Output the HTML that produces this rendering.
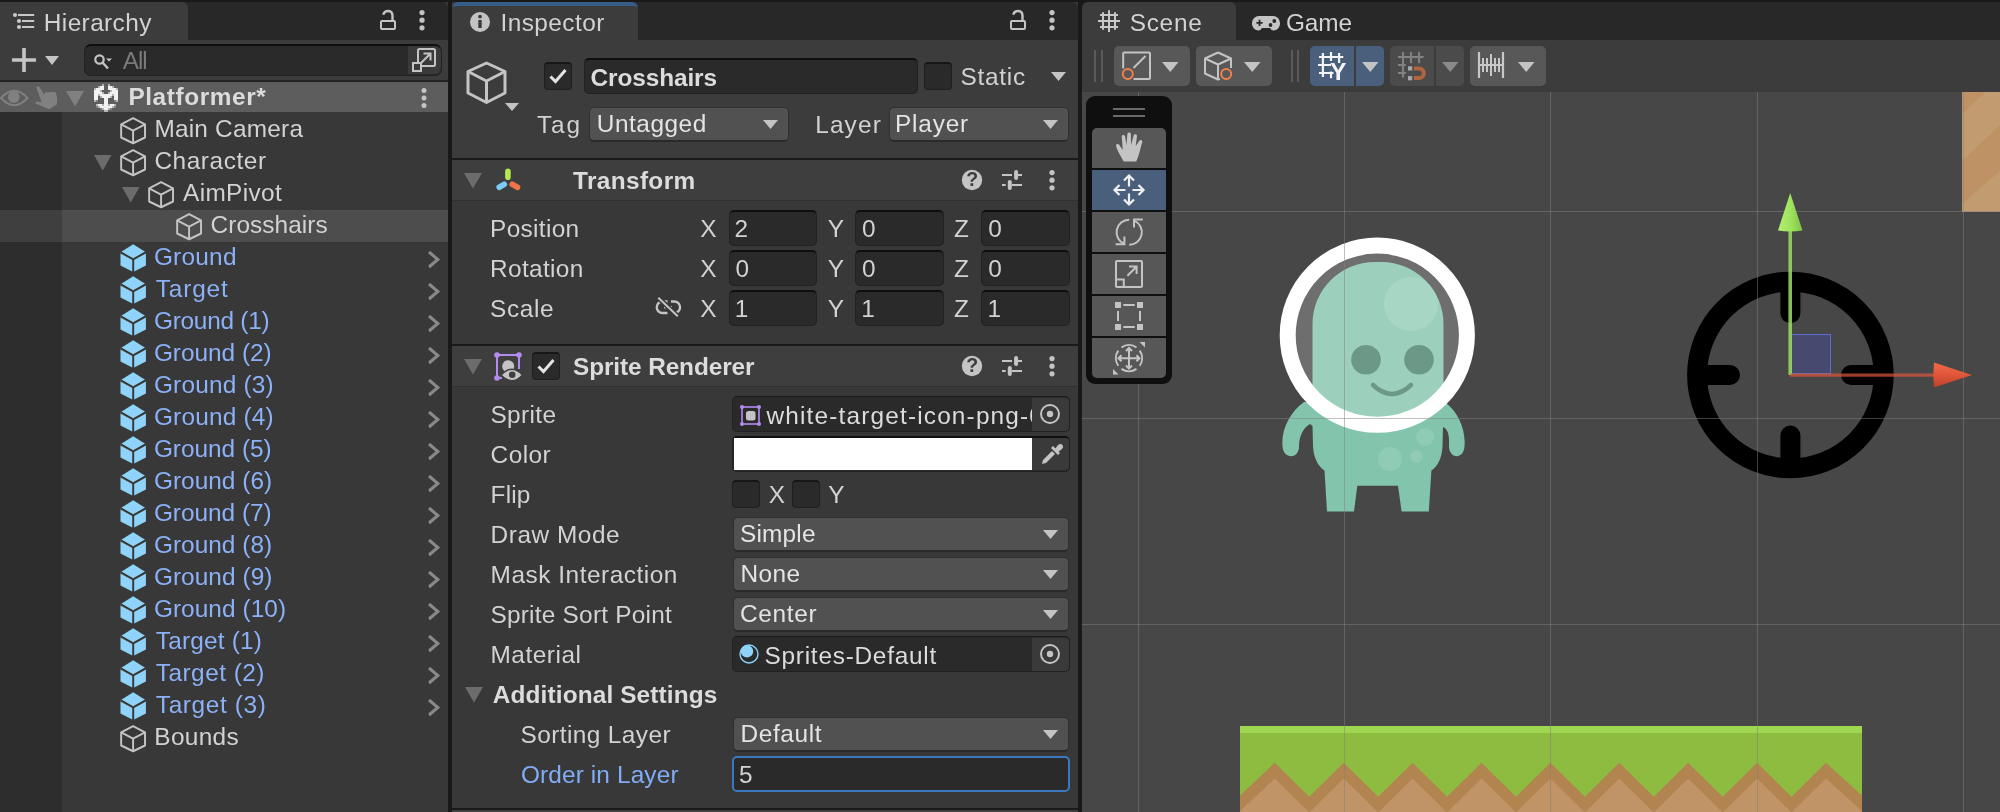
<!DOCTYPE html>
<html><head><meta charset="utf-8"><title>Unity Editor</title>
<style>
html,body{margin:0;padding:0;}
body{width:2000px;height:812px;overflow:hidden;background:#191919;position:relative;font-family:"Liberation Sans", sans-serif;}
.b{position:absolute;box-sizing:border-box;}
.t{position:absolute;white-space:pre;line-height:1;font-family:"Liberation Sans", sans-serif;}
svg{overflow:visible;}
#root{position:absolute;left:0;top:0;width:2000px;height:812px;will-change:transform;}
</style></head><body><div id="root">
<div class="b" style="left:0px;top:0px;width:2000px;height:2px;background:#191919;"></div>
<div class="b" style="left:0px;top:2px;width:448px;height:810px;background:#383838;"></div>
<div class="b" style="left:0px;top:2px;width:448px;height:38px;background:#282828;border-radius:0 6px 0 0;"></div>
<div class="b" style="left:0px;top:2px;width:188px;height:38px;background:#3c3c3c;border-radius:0 6px 0 0;"></div>
<svg class="b" style="left:8px;top:6px" width="32" height="28" viewBox="8 6 32 28"><g fill="#c8c8c8"><circle cx="15" cy="15" r="2.100"/><circle cx="19" cy="21" r="2.100"/><circle cx="19" cy="27" r="2.100"/><rect x="18" y="14" width="16.200" height="2"/><rect x="22" y="20" width="12.200" height="2"/><rect x="22" y="26" width="12.200" height="2"/></g></svg>
<div class="t" style="left:43.8px;top:10.55px;font-size:24.4px;font-weight:400;color:#d2d2d2;letter-spacing:0.403px;">Hierarchy</div>
<svg class="b" style="left:379px;top:10px;" width="18" height="22" viewBox="0 0 18 22"><g fill="none" stroke="#c4c4c4"><rect x="2" y="11" width="14" height="8" rx="1" stroke-width="2"/><path d="M4.200 4.800C5.500 -0.300 13.500 -0.800 13.500 6V11" stroke-width="2.400"/></g></svg>
<svg class="b" style="left:419px;top:9.5px;" width="6" height="22.799999999999997" viewBox="0 0 6 22.799999999999997"><circle cx="3" cy="2.6" r="2.6" fill="#c4c4c4"/><circle cx="3" cy="10.2" r="2.6" fill="#c4c4c4"/><circle cx="3" cy="17.8" r="2.6" fill="#c4c4c4"/></svg>
<div class="b" style="left:0px;top:40px;width:448px;height:40px;background:#3c3c3c;"></div>
<div class="b" style="left:0px;top:80px;width:448px;height:2px;background:#232323;"></div>
<svg class="b" style="left:12px;top:48px;" width="24" height="24" viewBox="0 0 24 24"><path d="M0 12H24M12 0V24" stroke="#c4c4c4" stroke-width="3.6" fill="none"/></svg>
<svg class="b" style="left:45px;top:56px;" width="14" height="9" viewBox="0 0 14 9"><path d="M0 0H14L7.0 9Z" fill="#c4c4c4"/></svg>
<div class="b" style="left:84px;top:44px;width:358px;height:32px;background:#2a2a2a;border-radius:7px;border:1px solid #212121;border-top:2px solid #0f0f0f;"></div>
<div class="b" style="left:408px;top:46px;width:33px;height:28px;background:#3a3a3a;border-radius:0 6px 6px 0;"></div>
<svg class="b" style="left:93px;top:52.7px;" width="20" height="18" viewBox="0 0 20 18"><circle cx="6.5" cy="6.5" r="4.2" fill="none" stroke="#c4c4c4" stroke-width="2.2"/><path d="M9.5 9.5L15 15.5" stroke="#c4c4c4" stroke-width="2.4"/><path d="M13 5.5H19L16 8.5Z" fill="#c4c4c4"/></svg>
<div class="t" style="left:122.8px;top:48.55px;font-size:24.4px;font-weight:400;color:#7a7a7a;letter-spacing:-1.145px;">All</div>
<svg class="b" style="left:411px;top:47px;" width="26" height="26" viewBox="0 0 26 26"><g fill="none" stroke="#c4c4c4" stroke-width="2"><path d="M7 16V3.5Q7 2 8.5 2H22.5Q24 2 24 3.5V17.5Q24 19 22.5 19H11"/><rect x="2" y="16" width="8" height="8" fill="#3a3a3a"/><path d="M10.5 15.5L19 7M12.5 6.5H19.5V13.5"/></g></svg>
<div class="b" style="left:0px;top:82px;width:62px;height:730px;background:#2d2d2d;"></div>
<div class="b" style="left:0px;top:82px;width:448px;height:30px;background:#5d5d5d;"></div>
<svg class="b" style="left:0px;top:82px" width="62" height="30" viewBox="0 82 62 30"><path d="M1 98Q14.200 83.500 27.500 98Q14.200 112.500 1 98Z" fill="none" stroke="#808080" stroke-width="2"/><circle cx="13.800" cy="97" r="5.900" fill="#808080"/><path d="M36.200 87.500Q37.500 85.500 39.300 86.800L44 94.500L45.500 92.500Q47 91.500 48 92.500Q49.500 91.500 50.800 92.300Q52.300 91.300 53.600 92.300Q55.200 91.500 56 93L57.200 98L56.800 104.500L49 109.300L35.500 103.500Q35 101.800 36.500 101.500L41.800 102.200Z" fill="#808080"/></svg>
<svg class="b" style="left:66px;top:91px;" width="18" height="15.5" viewBox="0 0 18 15.5"><path d="M0 0H18L9.0 15.5Z" fill="#808080"/></svg>
<svg class="b" style="left:94px;top:84px;" width="24" height="28" viewBox="0 0 24 28"><g shape-rendering="crispEdges"><rect x="8" y="0" width="2" height="2" fill="#b4b4b4"/><rect x="14" y="0" width="2" height="2" fill="#b4b4b4"/><rect x="4" y="2" width="2" height="2" fill="#b4b4b4"/><rect x="6" y="2" width="4" height="2" fill="#f2f2f2"/><rect x="14" y="2" width="4" height="2" fill="#f2f2f2"/><rect x="18" y="2" width="2" height="2" fill="#b4b4b4"/><rect x="0" y="4" width="2" height="2" fill="#b4b4b4"/><rect x="2" y="4" width="8" height="2" fill="#f2f2f2"/><rect x="14" y="4" width="8" height="2" fill="#f2f2f2"/><rect x="22" y="4" width="2" height="2" fill="#b4b4b4"/><rect x="0" y="6" width="6" height="2" fill="#f2f2f2"/><rect x="6" y="6" width="2" height="2" fill="#b4b4b4"/><rect x="16" y="6" width="2" height="2" fill="#b4b4b4"/><rect x="18" y="6" width="6" height="2" fill="#f2f2f2"/><rect x="0" y="8" width="8" height="2" fill="#f2f2f2"/><rect x="8" y="8" width="2" height="2" fill="#b4b4b4"/><rect x="14" y="8" width="2" height="2" fill="#b4b4b4"/><rect x="16" y="8" width="8" height="2" fill="#f2f2f2"/><rect x="0" y="10" width="4" height="2" fill="#f2f2f2"/><rect x="4" y="10" width="2" height="2" fill="#b4b4b4"/><rect x="6" y="10" width="12" height="2" fill="#f2f2f2"/><rect x="18" y="10" width="2" height="2" fill="#b4b4b4"/><rect x="20" y="10" width="4" height="2" fill="#f2f2f2"/><rect x="0" y="12" width="4" height="2" fill="#f2f2f2"/><rect x="6" y="12" width="2" height="2" fill="#b4b4b4"/><rect x="8" y="12" width="8" height="2" fill="#f2f2f2"/><rect x="16" y="12" width="2" height="2" fill="#b4b4b4"/><rect x="20" y="12" width="4" height="2" fill="#f2f2f2"/><rect x="0" y="14" width="4" height="2" fill="#f2f2f2"/><rect x="10" y="14" width="4" height="2" fill="#f2f2f2"/><rect x="20" y="14" width="4" height="2" fill="#f2f2f2"/><rect x="0" y="16" width="2" height="2" fill="#b4b4b4"/><rect x="2" y="16" width="2" height="2" fill="#7e7e7e"/><rect x="10" y="16" width="4" height="2" fill="#f2f2f2"/><rect x="20" y="16" width="2" height="2" fill="#7e7e7e"/><rect x="22" y="16" width="2" height="2" fill="#b4b4b4"/><rect x="10" y="18" width="4" height="2" fill="#f2f2f2"/><rect x="2" y="20" width="2" height="2" fill="#b4b4b4"/><rect x="4" y="20" width="4" height="2" fill="#f2f2f2"/><rect x="8" y="20" width="2" height="2" fill="#b4b4b4"/><rect x="10" y="20" width="4" height="2" fill="#f2f2f2"/><rect x="14" y="20" width="2" height="2" fill="#b4b4b4"/><rect x="16" y="20" width="4" height="2" fill="#f2f2f2"/><rect x="20" y="20" width="2" height="2" fill="#b4b4b4"/><rect x="2" y="22" width="2" height="2" fill="#7e7e7e"/><rect x="4" y="22" width="2" height="2" fill="#b4b4b4"/><rect x="6" y="22" width="12" height="2" fill="#f2f2f2"/><rect x="18" y="22" width="2" height="2" fill="#b4b4b4"/><rect x="20" y="22" width="2" height="2" fill="#7e7e7e"/><rect x="6" y="24" width="2" height="2" fill="#7e7e7e"/><rect x="8" y="24" width="2" height="2" fill="#b4b4b4"/><rect x="10" y="24" width="4" height="2" fill="#f2f2f2"/><rect x="14" y="24" width="2" height="2" fill="#b4b4b4"/><rect x="16" y="24" width="2" height="2" fill="#7e7e7e"/><rect x="10" y="26" width="4" height="2" fill="#b4b4b4"/></g></svg>
<div class="t" style="left:128.4px;top:84.55px;font-size:24.4px;font-weight:700;color:#dcdcdc;letter-spacing:0.591px;">Platformer*</div>
<svg class="b" style="left:421px;top:88px;" width="6" height="22.5" viewBox="0 0 6 22.5"><circle cx="3" cy="2.5" r="2.5" fill="#c4c4c4"/><circle cx="3" cy="10.0" r="2.5" fill="#c4c4c4"/><circle cx="3" cy="17.5" r="2.5" fill="#c4c4c4"/></svg>
<svg class="b" style="left:119.8px;top:116.7px;" width="26.2" height="27.3" viewBox="0 0 27 27" preserveAspectRatio="none"><g fill="none" stroke="#c4c4c4" stroke-width="2" stroke-linejoin="round"><path d="M13.5 1.2L25.800 7.300V20.300L13.500 26L1.200 20.300V7.300Z"/><path d="M1.200 7.300L13.500 13.400L25.800 7.300M13.500 13.400V26"/></g></svg>
<div class="t" style="left:154.4px;top:116.55px;font-size:24.4px;font-weight:400;color:#d2d2d2;letter-spacing:0.216px;">Main Camera</div>
<svg class="b" style="left:94.2px;top:155px;" width="17.5" height="15.5" viewBox="0 0 17.5 15.5"><path d="M0 0H17.5L8.75 15.5Z" fill="#6c6c6c"/></svg>
<svg class="b" style="left:119.8px;top:148.7px;" width="26.2" height="27.3" viewBox="0 0 27 27" preserveAspectRatio="none"><g fill="none" stroke="#c4c4c4" stroke-width="2" stroke-linejoin="round"><path d="M13.5 1.2L25.800 7.300V20.300L13.500 26L1.200 20.300V7.300Z"/><path d="M1.200 7.300L13.500 13.400L25.800 7.300M13.500 13.400V26"/></g></svg>
<div class="t" style="left:154.4px;top:148.55px;font-size:24.4px;font-weight:400;color:#d2d2d2;letter-spacing:0.579px;">Character</div>
<svg class="b" style="left:122.2px;top:187px;" width="17.5" height="15.5" viewBox="0 0 17.5 15.5"><path d="M0 0H17.5L8.75 15.5Z" fill="#6c6c6c"/></svg>
<svg class="b" style="left:147.8px;top:180.7px;" width="26.2" height="27.3" viewBox="0 0 27 27" preserveAspectRatio="none"><g fill="none" stroke="#c4c4c4" stroke-width="2" stroke-linejoin="round"><path d="M13.5 1.2L25.800 7.300V20.300L13.500 26L1.200 20.300V7.300Z"/><path d="M1.200 7.300L13.500 13.400L25.800 7.300M13.500 13.400V26"/></g></svg>
<div class="t" style="left:183.0px;top:180.55px;font-size:24.4px;font-weight:400;color:#d2d2d2;letter-spacing:0.363px;">AimPivot</div>
<div class="b" style="left:62px;top:210px;width:386px;height:32px;background:#4d4d4d;"></div>
<div class="b" style="left:0px;top:210px;width:62px;height:32px;background:#3f3f3f;"></div>
<svg class="b" style="left:175.8px;top:212.7px;" width="26.2" height="27.3" viewBox="0 0 27 27" preserveAspectRatio="none"><g fill="none" stroke="#c4c4c4" stroke-width="2" stroke-linejoin="round"><path d="M13.5 1.2L25.800 7.300V20.300L13.500 26L1.200 20.300V7.300Z"/><path d="M1.200 7.300L13.500 13.400L25.800 7.300M13.500 13.400V26"/></g></svg>
<div class="t" style="left:210.5px;top:212.55px;font-size:24.4px;font-weight:400;color:#d2d2d2;letter-spacing:0.070px;">Crosshairs</div>
<svg class="b" style="left:119.9px;top:244.2px;" width="26.4" height="27.8" viewBox="0 0 27 27" preserveAspectRatio="none"><path d="M13.5 0.3L26.5 8V21L13.5 27.3L0.5 21V8Z" fill="#8fd3f8"/><path d="M0.5 8L13.5 15L26.5 8M13.5 15V27.3" fill="none" stroke="#383838" stroke-width="2"/></svg>
<div class="t" style="left:153.9px;top:244.55px;font-size:24.4px;font-weight:400;color:#8cb1f7;letter-spacing:0.241px;">Ground</div>
<svg class="b" style="left:427px;top:249.6px;" width="13" height="19" viewBox="0 0 13 19"><path d="M2 2L10.800 9.500L2 17" fill="none" stroke="#8a8a8a" stroke-width="3"/></svg>
<svg class="b" style="left:119.9px;top:276.2px;" width="26.4" height="27.8" viewBox="0 0 27 27" preserveAspectRatio="none"><path d="M13.5 0.3L26.5 8V21L13.5 27.3L0.5 21V8Z" fill="#8fd3f8"/><path d="M0.5 8L13.5 15L26.5 8M13.5 15V27.3" fill="none" stroke="#383838" stroke-width="2"/></svg>
<div class="t" style="left:155.8px;top:276.55px;font-size:24.4px;font-weight:400;color:#8cb1f7;letter-spacing:0.816px;">Target</div>
<svg class="b" style="left:427px;top:281.6px;" width="13" height="19" viewBox="0 0 13 19"><path d="M2 2L10.800 9.500L2 17" fill="none" stroke="#8a8a8a" stroke-width="3"/></svg>
<svg class="b" style="left:119.9px;top:308.2px;" width="26.4" height="27.8" viewBox="0 0 27 27" preserveAspectRatio="none"><path d="M13.5 0.3L26.5 8V21L13.5 27.3L0.5 21V8Z" fill="#8fd3f8"/><path d="M0.5 8L13.5 15L26.5 8M13.5 15V27.3" fill="none" stroke="#383838" stroke-width="2"/></svg>
<div class="t" style="left:153.9px;top:308.55px;font-size:24.4px;font-weight:400;color:#8cb1f7;letter-spacing:-0.237px;">Ground (1)</div>
<svg class="b" style="left:427px;top:313.6px;" width="13" height="19" viewBox="0 0 13 19"><path d="M2 2L10.800 9.500L2 17" fill="none" stroke="#8a8a8a" stroke-width="3"/></svg>
<svg class="b" style="left:119.9px;top:340.2px;" width="26.4" height="27.8" viewBox="0 0 27 27" preserveAspectRatio="none"><path d="M13.5 0.3L26.5 8V21L13.5 27.3L0.5 21V8Z" fill="#8fd3f8"/><path d="M0.5 8L13.5 15L26.5 8M13.5 15V27.3" fill="none" stroke="#383838" stroke-width="2"/></svg>
<div class="t" style="left:153.9px;top:340.55px;font-size:24.4px;font-weight:400;color:#8cb1f7;letter-spacing:-0.015px;">Ground (2)</div>
<svg class="b" style="left:427px;top:345.6px;" width="13" height="19" viewBox="0 0 13 19"><path d="M2 2L10.800 9.500L2 17" fill="none" stroke="#8a8a8a" stroke-width="3"/></svg>
<svg class="b" style="left:119.9px;top:372.2px;" width="26.4" height="27.8" viewBox="0 0 27 27" preserveAspectRatio="none"><path d="M13.5 0.3L26.5 8V21L13.5 27.3L0.5 21V8Z" fill="#8fd3f8"/><path d="M0.5 8L13.5 15L26.5 8M13.5 15V27.3" fill="none" stroke="#383838" stroke-width="2"/></svg>
<div class="t" style="left:153.9px;top:372.55px;font-size:24.4px;font-weight:400;color:#8cb1f7;letter-spacing:0.208px;">Ground (3)</div>
<svg class="b" style="left:427px;top:377.6px;" width="13" height="19" viewBox="0 0 13 19"><path d="M2 2L10.800 9.500L2 17" fill="none" stroke="#8a8a8a" stroke-width="3"/></svg>
<svg class="b" style="left:119.9px;top:404.2px;" width="26.4" height="27.8" viewBox="0 0 27 27" preserveAspectRatio="none"><path d="M13.5 0.3L26.5 8V21L13.5 27.3L0.5 21V8Z" fill="#8fd3f8"/><path d="M0.5 8L13.5 15L26.5 8M13.5 15V27.3" fill="none" stroke="#383838" stroke-width="2"/></svg>
<div class="t" style="left:153.9px;top:404.55px;font-size:24.4px;font-weight:400;color:#8cb1f7;letter-spacing:0.208px;">Ground (4)</div>
<svg class="b" style="left:427px;top:409.6px;" width="13" height="19" viewBox="0 0 13 19"><path d="M2 2L10.800 9.500L2 17" fill="none" stroke="#8a8a8a" stroke-width="3"/></svg>
<svg class="b" style="left:119.9px;top:436.2px;" width="26.4" height="27.8" viewBox="0 0 27 27" preserveAspectRatio="none"><path d="M13.5 0.3L26.5 8V21L13.5 27.3L0.5 21V8Z" fill="#8fd3f8"/><path d="M0.5 8L13.5 15L26.5 8M13.5 15V27.3" fill="none" stroke="#383838" stroke-width="2"/></svg>
<div class="t" style="left:153.9px;top:436.55px;font-size:24.4px;font-weight:400;color:#8cb1f7;letter-spacing:-0.015px;">Ground (5)</div>
<svg class="b" style="left:427px;top:441.6px;" width="13" height="19" viewBox="0 0 13 19"><path d="M2 2L10.800 9.500L2 17" fill="none" stroke="#8a8a8a" stroke-width="3"/></svg>
<svg class="b" style="left:119.9px;top:468.2px;" width="26.4" height="27.8" viewBox="0 0 27 27" preserveAspectRatio="none"><path d="M13.5 0.3L26.5 8V21L13.5 27.3L0.5 21V8Z" fill="#8fd3f8"/><path d="M0.5 8L13.5 15L26.5 8M13.5 15V27.3" fill="none" stroke="#383838" stroke-width="2"/></svg>
<div class="t" style="left:153.9px;top:468.55px;font-size:24.4px;font-weight:400;color:#8cb1f7;letter-spacing:0.030px;">Ground (6)</div>
<svg class="b" style="left:427px;top:473.6px;" width="13" height="19" viewBox="0 0 13 19"><path d="M2 2L10.800 9.500L2 17" fill="none" stroke="#8a8a8a" stroke-width="3"/></svg>
<svg class="b" style="left:119.9px;top:500.2px;" width="26.4" height="27.8" viewBox="0 0 27 27" preserveAspectRatio="none"><path d="M13.5 0.3L26.5 8V21L13.5 27.3L0.5 21V8Z" fill="#8fd3f8"/><path d="M0.5 8L13.5 15L26.5 8M13.5 15V27.3" fill="none" stroke="#383838" stroke-width="2"/></svg>
<div class="t" style="left:153.9px;top:500.55px;font-size:24.4px;font-weight:400;color:#8cb1f7;letter-spacing:-0.015px;">Ground (7)</div>
<svg class="b" style="left:427px;top:505.6px;" width="13" height="19" viewBox="0 0 13 19"><path d="M2 2L10.800 9.500L2 17" fill="none" stroke="#8a8a8a" stroke-width="3"/></svg>
<svg class="b" style="left:119.9px;top:532.2px;" width="26.4" height="27.8" viewBox="0 0 27 27" preserveAspectRatio="none"><path d="M13.5 0.3L26.5 8V21L13.5 27.3L0.5 21V8Z" fill="#8fd3f8"/><path d="M0.5 8L13.5 15L26.5 8M13.5 15V27.3" fill="none" stroke="#383838" stroke-width="2"/></svg>
<div class="t" style="left:153.9px;top:532.55px;font-size:24.4px;font-weight:400;color:#8cb1f7;letter-spacing:0.030px;">Ground (8)</div>
<svg class="b" style="left:427px;top:537.6px;" width="13" height="19" viewBox="0 0 13 19"><path d="M2 2L10.800 9.500L2 17" fill="none" stroke="#8a8a8a" stroke-width="3"/></svg>
<svg class="b" style="left:119.9px;top:564.2px;" width="26.4" height="27.8" viewBox="0 0 27 27" preserveAspectRatio="none"><path d="M13.5 0.3L26.5 8V21L13.5 27.3L0.5 21V8Z" fill="#8fd3f8"/><path d="M0.5 8L13.5 15L26.5 8M13.5 15V27.3" fill="none" stroke="#383838" stroke-width="2"/></svg>
<div class="t" style="left:153.9px;top:564.55px;font-size:24.4px;font-weight:400;color:#8cb1f7;letter-spacing:0.063px;">Ground (9)</div>
<svg class="b" style="left:427px;top:569.6px;" width="13" height="19" viewBox="0 0 13 19"><path d="M2 2L10.800 9.500L2 17" fill="none" stroke="#8a8a8a" stroke-width="3"/></svg>
<svg class="b" style="left:119.9px;top:596.2px;" width="26.4" height="27.8" viewBox="0 0 27 27" preserveAspectRatio="none"><path d="M13.5 0.3L26.5 8V21L13.5 27.3L0.5 21V8Z" fill="#8fd3f8"/><path d="M0.5 8L13.5 15L26.5 8M13.5 15V27.3" fill="none" stroke="#383838" stroke-width="2"/></svg>
<div class="t" style="left:153.9px;top:596.55px;font-size:24.4px;font-weight:400;color:#8cb1f7;letter-spacing:0.061px;">Ground (10)</div>
<svg class="b" style="left:427px;top:601.6px;" width="13" height="19" viewBox="0 0 13 19"><path d="M2 2L10.800 9.500L2 17" fill="none" stroke="#8a8a8a" stroke-width="3"/></svg>
<svg class="b" style="left:119.9px;top:628.2px;" width="26.4" height="27.8" viewBox="0 0 27 27" preserveAspectRatio="none"><path d="M13.5 0.3L26.5 8V21L13.5 27.3L0.5 21V8Z" fill="#8fd3f8"/><path d="M0.5 8L13.5 15L26.5 8M13.5 15V27.3" fill="none" stroke="#383838" stroke-width="2"/></svg>
<div class="t" style="left:155.8px;top:628.55px;font-size:24.4px;font-weight:400;color:#8cb1f7;letter-spacing:0.194px;">Target (1)</div>
<svg class="b" style="left:427px;top:633.6px;" width="13" height="19" viewBox="0 0 13 19"><path d="M2 2L10.800 9.500L2 17" fill="none" stroke="#8a8a8a" stroke-width="3"/></svg>
<svg class="b" style="left:119.9px;top:660.2px;" width="26.4" height="27.8" viewBox="0 0 27 27" preserveAspectRatio="none"><path d="M13.5 0.3L26.5 8V21L13.5 27.3L0.5 21V8Z" fill="#8fd3f8"/><path d="M0.5 8L13.5 15L26.5 8M13.5 15V27.3" fill="none" stroke="#383838" stroke-width="2"/></svg>
<div class="t" style="left:155.8px;top:660.55px;font-size:24.4px;font-weight:400;color:#8cb1f7;letter-spacing:0.472px;">Target (2)</div>
<svg class="b" style="left:427px;top:665.6px;" width="13" height="19" viewBox="0 0 13 19"><path d="M2 2L10.800 9.500L2 17" fill="none" stroke="#8a8a8a" stroke-width="3"/></svg>
<svg class="b" style="left:119.9px;top:692.2px;" width="26.4" height="27.8" viewBox="0 0 27 27" preserveAspectRatio="none"><path d="M13.5 0.3L26.5 8V21L13.5 27.3L0.5 21V8Z" fill="#8fd3f8"/><path d="M0.5 8L13.5 15L26.5 8M13.5 15V27.3" fill="none" stroke="#383838" stroke-width="2"/></svg>
<div class="t" style="left:155.8px;top:692.55px;font-size:24.4px;font-weight:400;color:#8cb1f7;letter-spacing:0.639px;">Target (3)</div>
<svg class="b" style="left:427px;top:697.6px;" width="13" height="19" viewBox="0 0 13 19"><path d="M2 2L10.800 9.500L2 17" fill="none" stroke="#8a8a8a" stroke-width="3"/></svg>
<svg class="b" style="left:119.8px;top:724.7px;" width="26.2" height="27.3" viewBox="0 0 27 27" preserveAspectRatio="none"><g fill="none" stroke="#c4c4c4" stroke-width="2" stroke-linejoin="round"><path d="M13.5 1.2L25.800 7.300V20.300L13.500 26L1.200 20.300V7.300Z"/><path d="M1.200 7.300L13.500 13.400L25.800 7.300M13.500 13.400V26"/></g></svg>
<div class="t" style="left:154.3px;top:724.55px;font-size:24.4px;font-weight:400;color:#d2d2d2;letter-spacing:0.332px;">Bounds</div>
<div class="b" style="left:452px;top:2px;width:626px;height:810px;background:#383838;"></div>
<div class="b" style="left:452px;top:2px;width:626px;height:38px;background:#282828;border-radius:6px 6px 0 0;"></div>
<div class="b" style="left:452px;top:2px;width:186px;height:38px;background:#3c3c3c;border-radius:6px 6px 0 0;border-top:4px solid #365c88;"></div>
<svg class="b" style="left:470px;top:12px;" width="20" height="20" viewBox="0 0 20 20"><circle cx="10" cy="10" r="10" fill="#c4c4c4"/><circle cx="10" cy="4.6" r="1.9" fill="#3c3c3c"/><rect x="8.3" y="8" width="3.4" height="8" fill="#3c3c3c"/></svg>
<div class="t" style="left:500.5px;top:10.55px;font-size:24.4px;font-weight:400;color:#d2d2d2;letter-spacing:0.437px;">Inspector</div>
<svg class="b" style="left:1009px;top:10px;" width="18" height="22" viewBox="0 0 18 22"><g fill="none" stroke="#c4c4c4"><rect x="2" y="11" width="14" height="8" rx="1" stroke-width="2"/><path d="M4.200 4.800C5.500 -0.300 13.500 -0.800 13.500 6V11" stroke-width="2.400"/></g></svg>
<svg class="b" style="left:1049px;top:9.5px;" width="6" height="22.799999999999997" viewBox="0 0 6 22.799999999999997"><circle cx="3" cy="2.6" r="2.6" fill="#c4c4c4"/><circle cx="3" cy="10.2" r="2.6" fill="#c4c4c4"/><circle cx="3" cy="17.8" r="2.6" fill="#c4c4c4"/></svg>
<div class="b" style="left:452px;top:40px;width:626px;height:118px;background:#3c3c3c;"></div>
<svg class="b" style="left:466px;top:61px;" width="42" height="44" viewBox="0 0 42 44"><g fill="none" stroke="#c4c4c4" stroke-width="3" stroke-linejoin="round"><path d="M20.5 2L39 10.5V32L20.5 41.5L2 32V10.5Z"/><path d="M2 10.5L20.5 20L39 10.5M20.5 20V41.5"/></g></svg>
<svg class="b" style="left:505px;top:102.5px;" width="14" height="8" viewBox="0 0 14 8"><path d="M0 0H14L7.0 8Z" fill="#c4c4c4"/></svg>
<div class="b" style="left:544px;top:62px;width:28px;height:28px;background:#2a2a2a;border-radius:4px;border:1px solid #1f1f1f;border-top:2px solid #171717;"></div>
<svg class="b" style="left:544px;top:62px;" width="28" height="28" viewBox="0 0 28 28"><path d="M6.5 14.5L11.5 19.5L21.5 8" fill="none" stroke="#e4e4e4" stroke-width="3"/></svg>
<div class="b" style="left:584px;top:58px;width:334px;height:36px;background:#2a2a2a;border-radius:5px;border:1px solid #212121;border-top:2px solid #0f0f0f;"></div>
<div class="t" style="left:590.6px;top:65.55px;font-size:24.4px;font-weight:700;color:#dcdcdc;letter-spacing:-0.108px;">Crosshairs</div>
<div class="b" style="left:924px;top:62px;width:28px;height:28px;background:#2a2a2a;border-radius:4px;border:1px solid #1f1f1f;border-top:2px solid #171717;"></div>
<div class="t" style="left:960.5px;top:64.55px;font-size:24.4px;font-weight:400;color:#d2d2d2;letter-spacing:0.736px;">Static</div>
<svg class="b" style="left:1050.5px;top:72px;" width="15" height="9" viewBox="0 0 15 9"><path d="M0 0H15L7.5 9Z" fill="#c4c4c4"/></svg>
<div class="t" style="left:537.0px;top:112.55px;font-size:24.4px;font-weight:400;color:#d2d2d2;letter-spacing:1.868px;">Tag</div>
<div class="b" style="left:589px;top:107px;width:200px;height:35px;background:#515151;border-radius:5px;border:1px solid #303030;border-bottom:2px solid #2a2a2a;"></div>
<svg class="b" style="left:763px;top:120px;" width="15" height="9" viewBox="0 0 15 9"><path d="M0 0H15L7.5 9Z" fill="#c4c4c4"/></svg>
<div class="t" style="left:596.8px;top:111.55px;font-size:24.4px;font-weight:400;color:#e4e4e4;letter-spacing:0.526px;">Untagged</div>
<div class="t" style="left:815.2px;top:112.55px;font-size:24.4px;font-weight:400;color:#d2d2d2;letter-spacing:1.152px;">Layer</div>
<div class="b" style="left:889px;top:107px;width:180px;height:35px;background:#515151;border-radius:5px;border:1px solid #303030;border-bottom:2px solid #2a2a2a;"></div>
<svg class="b" style="left:1043px;top:120px;" width="15" height="9" viewBox="0 0 15 9"><path d="M0 0H15L7.5 9Z" fill="#c4c4c4"/></svg>
<div class="t" style="left:895.0px;top:111.55px;font-size:24.4px;font-weight:400;color:#e4e4e4;letter-spacing:0.796px;">Player</div>
<div class="b" style="left:452px;top:158px;width:626px;height:2px;background:#1a1a1a;"></div>
<div class="b" style="left:452px;top:160px;width:626px;height:40px;background:#3e3e3e;"></div>
<div class="b" style="left:452px;top:200px;width:626px;height:1px;background:#303030;"></div>
<svg class="b" style="left:463.8px;top:173px;" width="18" height="15.5" viewBox="0 0 18 15.5"><path d="M0 0H18L9.0 15.5Z" fill="#6c6c6c"/></svg>
<div class="t" style="left:573.0px;top:168.55px;font-size:24.4px;font-weight:700;color:#dcdcdc;letter-spacing:0.363px;">Transform</div>
<svg class="b" style="left:962px;top:170px;" width="20" height="20" viewBox="0 0 20 20"><circle cx="10" cy="10" r="10.2" fill="#c4c4c4"/></svg>
<div class="t" style="left:966.2px;top:170.2px;font-size:19.5px;font-weight:700;color:#3e3e3e;">?</div>
<svg class="b" style="left:1002px;top:170px;" width="20" height="20" viewBox="0 0 20 20"><g stroke="#c4c4c4" stroke-width="2" fill="none"><path d="M0 5H10M16 5H20"/><path d="M0 15H3.700M10 15H20"/></g><g stroke="#c4c4c4" stroke-width="4" stroke-linecap="round"><path d="M14.100 2V8"/><path d="M7.800 12V18"/></g></svg>
<svg class="b" style="left:1049px;top:169.6px;" width="6" height="22.799999999999997" viewBox="0 0 6 22.799999999999997"><circle cx="3" cy="2.6" r="2.6" fill="#c4c4c4"/><circle cx="3" cy="10.2" r="2.6" fill="#c4c4c4"/><circle cx="3" cy="17.8" r="2.6" fill="#c4c4c4"/></svg>
<svg class="b" style="left:490px;top:162px" width="36" height="36" viewBox="490 162 36 36"><g stroke-linecap="round" stroke-width="5.600" fill="none"><path d="M507.900 171.200V177.200" stroke="#b4e750"/><path d="M499.200 187.200L504.300 184.300" stroke="#7ccbf8"/><path d="M512.200 184.300L517.500 187.300" stroke="#ee7548"/></g></svg>
<div class="t" style="left:490.1px;top:216.55px;font-size:24.4px;font-weight:400;color:#d2d2d2;letter-spacing:0.326px;">Position</div>
<div class="t" style="left:700.2px;top:216.55px;font-size:24.4px;font-weight:400;color:#d2d2d2;letter-spacing:-3.013px;">X</div>
<div class="b" style="left:728.5px;top:210px;width:88.5px;height:36px;background:#2a2a2a;border-radius:5px;border:1px solid #212121;border-top:2px solid #0f0f0f;"></div>
<div class="t" style="left:734.5px;top:216.55px;font-size:24.4px;font-weight:400;color:#d2d2d2;letter-spacing:0.000px;">2</div>
<div class="t" style="left:827.8px;top:216.55px;font-size:24.4px;font-weight:400;color:#d2d2d2;letter-spacing:-1.413px;">Y</div>
<div class="b" style="left:855px;top:210px;width:88.5px;height:36px;background:#2a2a2a;border-radius:5px;border:1px solid #212121;border-top:2px solid #0f0f0f;"></div>
<div class="t" style="left:862.0px;top:216.55px;font-size:24.4px;font-weight:400;color:#d2d2d2;letter-spacing:0.000px;">0</div>
<div class="t" style="left:954.0px;top:216.55px;font-size:24.4px;font-weight:400;color:#d2d2d2;letter-spacing:-2.007px;">Z</div>
<div class="b" style="left:981.3px;top:210px;width:88.5px;height:36px;background:#2a2a2a;border-radius:5px;border:1px solid #212121;border-top:2px solid #0f0f0f;"></div>
<div class="t" style="left:988.3px;top:216.55px;font-size:24.4px;font-weight:400;color:#d2d2d2;letter-spacing:0.000px;">0</div>
<div class="t" style="left:490.1px;top:256.55px;font-size:24.4px;font-weight:400;color:#d2d2d2;letter-spacing:0.344px;">Rotation</div>
<div class="t" style="left:700.2px;top:256.55px;font-size:24.4px;font-weight:400;color:#d2d2d2;letter-spacing:-3.013px;">X</div>
<div class="b" style="left:728.5px;top:250px;width:88.5px;height:36px;background:#2a2a2a;border-radius:5px;border:1px solid #212121;border-top:2px solid #0f0f0f;"></div>
<div class="t" style="left:735.5px;top:256.55px;font-size:24.4px;font-weight:400;color:#d2d2d2;letter-spacing:0.000px;">0</div>
<div class="t" style="left:827.8px;top:256.55px;font-size:24.4px;font-weight:400;color:#d2d2d2;letter-spacing:-1.413px;">Y</div>
<div class="b" style="left:855px;top:250px;width:88.5px;height:36px;background:#2a2a2a;border-radius:5px;border:1px solid #212121;border-top:2px solid #0f0f0f;"></div>
<div class="t" style="left:862.0px;top:256.55px;font-size:24.4px;font-weight:400;color:#d2d2d2;letter-spacing:0.000px;">0</div>
<div class="t" style="left:954.0px;top:256.55px;font-size:24.4px;font-weight:400;color:#d2d2d2;letter-spacing:-2.007px;">Z</div>
<div class="b" style="left:981.3px;top:250px;width:88.5px;height:36px;background:#2a2a2a;border-radius:5px;border:1px solid #212121;border-top:2px solid #0f0f0f;"></div>
<div class="t" style="left:988.3px;top:256.55px;font-size:24.4px;font-weight:400;color:#d2d2d2;letter-spacing:0.000px;">0</div>
<div class="t" style="left:490.0px;top:296.55px;font-size:24.4px;font-weight:400;color:#d2d2d2;letter-spacing:0.662px;">Scale</div>
<div class="t" style="left:700.2px;top:296.55px;font-size:24.4px;font-weight:400;color:#d2d2d2;letter-spacing:-3.013px;">X</div>
<div class="b" style="left:728.5px;top:290px;width:88.5px;height:36px;background:#2a2a2a;border-radius:5px;border:1px solid #212121;border-top:2px solid #0f0f0f;"></div>
<div class="t" style="left:734.8px;top:296.55px;font-size:24.4px;font-weight:400;color:#d2d2d2;letter-spacing:0.000px;">1</div>
<div class="t" style="left:827.8px;top:296.55px;font-size:24.4px;font-weight:400;color:#d2d2d2;letter-spacing:-1.413px;">Y</div>
<div class="b" style="left:855px;top:290px;width:88.5px;height:36px;background:#2a2a2a;border-radius:5px;border:1px solid #212121;border-top:2px solid #0f0f0f;"></div>
<div class="t" style="left:861.3px;top:296.55px;font-size:24.4px;font-weight:400;color:#d2d2d2;letter-spacing:0.000px;">1</div>
<div class="t" style="left:954.0px;top:296.55px;font-size:24.4px;font-weight:400;color:#d2d2d2;letter-spacing:-2.007px;">Z</div>
<div class="b" style="left:981.3px;top:290px;width:88.5px;height:36px;background:#2a2a2a;border-radius:5px;border:1px solid #212121;border-top:2px solid #0f0f0f;"></div>
<div class="t" style="left:987.6px;top:296.55px;font-size:24.4px;font-weight:400;color:#d2d2d2;letter-spacing:0.000px;">1</div>
<svg class="b" style="left:650px;top:292px" width="36" height="30" viewBox="650 292 36 30"><g fill="none" stroke="#c4c4c4" stroke-width="2.400"><path d="M667.500 301.500H662.500A5.750 5.750 0 0 0 662.500 313H667.500"/><path d="M671 301.500H674.300A5.750 5.750 0 0 1 674.300 313H672.500"/><path d="M664 307.200H672"/></g><path d="M658.300 297.700L677.800 316.200" stroke="#383838" stroke-width="5"/><path d="M658.300 297.700L677.800 316.200" stroke="#c4c4c4" stroke-width="2"/></svg>
<div class="b" style="left:452px;top:344px;width:626px;height:2px;background:#1a1a1a;"></div>
<div class="b" style="left:452px;top:346px;width:626px;height:40px;background:#3e3e3e;"></div>
<div class="b" style="left:452px;top:386px;width:626px;height:1px;background:#303030;"></div>
<svg class="b" style="left:463.8px;top:359px;" width="18" height="15.5" viewBox="0 0 18 15.5"><path d="M0 0H18L9.0 15.5Z" fill="#6c6c6c"/></svg>
<div class="t" style="left:573.0px;top:354.55px;font-size:24.4px;font-weight:700;color:#dcdcdc;letter-spacing:-0.108px;">Sprite Renderer</div>
<svg class="b" style="left:962px;top:356px;" width="20" height="20" viewBox="0 0 20 20"><circle cx="10" cy="10" r="10.2" fill="#c4c4c4"/></svg>
<div class="t" style="left:966.2px;top:356.2px;font-size:19.5px;font-weight:700;color:#3e3e3e;">?</div>
<svg class="b" style="left:1002px;top:356px;" width="20" height="20" viewBox="0 0 20 20"><g stroke="#c4c4c4" stroke-width="2" fill="none"><path d="M0 5H10M16 5H20"/><path d="M0 15H3.700M10 15H20"/></g><g stroke="#c4c4c4" stroke-width="4" stroke-linecap="round"><path d="M14.100 2V8"/><path d="M7.800 12V18"/></g></svg>
<svg class="b" style="left:1049px;top:355.6px;" width="6" height="22.799999999999997" viewBox="0 0 6 22.799999999999997"><circle cx="3" cy="2.6" r="2.6" fill="#c4c4c4"/><circle cx="3" cy="10.2" r="2.6" fill="#c4c4c4"/><circle cx="3" cy="17.8" r="2.6" fill="#c4c4c4"/></svg>
<svg class="b" style="left:493.8px;top:351.8px;" width="30" height="30" viewBox="0 0 30 30"><g fill="none" stroke="#b48cf0" stroke-width="2"><path d="M8 26H3V3H25V17"/></g><g fill="#b48cf0"><circle cx="3" cy="3" r="2.800"/><circle cx="25" cy="3" r="2.800"/><circle cx="3" cy="26" r="2.800"/></g><circle cx="14.200" cy="14.200" r="6" fill="#c4c4c4"/><path d="M7 23Q17.800 11.500 28.600 23Q17.800 34.500 7 23Z" fill="#c4c4c4" stroke="#3e3e3e" stroke-width="1.600"/><circle cx="18.200" cy="22.800" r="3.300" fill="#3e3e3e"/></svg>
<div class="b" style="left:532px;top:352px;width:28px;height:28px;background:#2a2a2a;border-radius:4px;border:1px solid #1f1f1f;border-top:2px solid #171717;"></div>
<svg class="b" style="left:532px;top:352px;" width="28" height="28" viewBox="0 0 28 28"><path d="M6.5 14.5L11.5 19.5L21.5 8" fill="none" stroke="#e4e4e4" stroke-width="3"/></svg>
<div class="t" style="left:490.4px;top:402.55px;font-size:24.4px;font-weight:400;color:#d2d2d2;letter-spacing:0.389px;">Sprite</div>
<div class="b" style="left:732px;top:396px;width:338px;height:36px;background:#2a2a2a;border-radius:5px;border:1px solid #212121;border-top:2px solid #0f0f0f;border-top:1px solid #1c1c1c;"></div>
<div class="b" style="left:1031.5px;top:398px;width:37.5px;height:33px;background:#3a3a3a;border-radius:0 4px 4px 0;"></div>
<svg class="b" style="left:1040px;top:404.3px;" width="20" height="20" viewBox="0 0 20 20"><circle cx="10" cy="10" r="9" fill="none" stroke="#c4c4c4" stroke-width="2"/><circle cx="10" cy="10" r="3.2" fill="#c4c4c4"/></svg>
<div class="b" style="left:760px;top:398px;width:272px;height:33px;overflow:hidden;">
<div class="t" style="left:6.5px;top:5.55px;font-size:24.4px;font-weight:400;color:#dcdcdc;letter-spacing:1.165px;">white-target-icon-png-0</div>
</div>

<svg class="b" style="left:739.7px;top:404.5px;" width="21" height="21" viewBox="0 0 21 21"><rect x="2" y="2" width="17" height="17" fill="none" stroke="#b48cf0" stroke-width="1.6"/><g fill="#b48cf0"><circle cx="2" cy="2" r="2"/><circle cx="19" cy="2" r="2"/><circle cx="2" cy="19" r="2"/><circle cx="19" cy="19" r="2"/></g><rect x="6" y="6" width="9.5" height="9.5" rx="2.5" fill="#c4c4c4"/></svg>
<div class="t" style="left:490.6px;top:442.55px;font-size:24.4px;font-weight:400;color:#d2d2d2;letter-spacing:0.456px;">Color</div>
<div class="b" style="left:732px;top:436px;width:338px;height:36px;background:#2a2a2a;border-radius:5px;border:1px solid #212121;border-top:2px solid #0f0f0f;"></div>
<div class="b" style="left:734px;top:438px;width:298px;height:32px;background:#ffffff;"></div>
<div class="b" style="left:1032px;top:438px;width:37px;height:32px;background:#3a3a3a;border-radius:0 4px 4px 0;"></div>
<svg class="b" style="left:1040px;top:441.5px;" width="24" height="24" viewBox="0 0 24 24"><g fill="#c4c4c4"><path d="M2 22L3 18L12 9L15 12L6 21Z"/><path d="M11 6L13 4L20 11L18 13Z"/><path d="M15 7L18 3Q20.5 1 22.5 3Q24 5 22 7L18 10Z"/></g></svg>
<div class="t" style="left:490.6px;top:482.55px;font-size:24.4px;font-weight:400;color:#d2d2d2;letter-spacing:0.151px;">Flip</div>
<div class="b" style="left:732px;top:480px;width:28px;height:28px;background:#2a2a2a;border-radius:4px;border:1px solid #1f1f1f;border-top:2px solid #171717;"></div>
<div class="t" style="left:768.7px;top:482.55px;font-size:24.4px;font-weight:400;color:#d2d2d2;letter-spacing:-2.213px;">X</div>
<div class="b" style="left:792px;top:480px;width:28px;height:28px;background:#2a2a2a;border-radius:4px;border:1px solid #1f1f1f;border-top:2px solid #171717;"></div>
<div class="t" style="left:828.3px;top:482.55px;font-size:24.4px;font-weight:400;color:#d2d2d2;letter-spacing:-1.513px;">Y</div>
<div class="t" style="left:490.6px;top:522.55px;font-size:24.4px;font-weight:400;color:#d2d2d2;letter-spacing:0.531px;">Draw Mode</div>
<div class="b" style="left:733px;top:517px;width:336px;height:35px;background:#515151;border-radius:5px;border:1px solid #303030;border-bottom:2px solid #2a2a2a;"></div>
<svg class="b" style="left:1043px;top:530px;" width="15" height="9" viewBox="0 0 15 9"><path d="M0 0H15L7.5 9Z" fill="#c4c4c4"/></svg>
<div class="t" style="left:740.0px;top:521.55px;font-size:24.4px;font-weight:400;color:#e4e4e4;letter-spacing:0.200px;">Simple</div>
<div class="t" style="left:490.6px;top:562.55px;font-size:24.4px;font-weight:400;color:#d2d2d2;letter-spacing:0.527px;">Mask Interaction</div>
<div class="b" style="left:733px;top:557px;width:336px;height:35px;background:#515151;border-radius:5px;border:1px solid #303030;border-bottom:2px solid #2a2a2a;"></div>
<svg class="b" style="left:1043px;top:570px;" width="15" height="9" viewBox="0 0 15 9"><path d="M0 0H15L7.5 9Z" fill="#c4c4c4"/></svg>
<div class="t" style="left:740.5px;top:561.55px;font-size:24.4px;font-weight:400;color:#e4e4e4;letter-spacing:0.417px;">None</div>
<div class="t" style="left:490.4px;top:602.55px;font-size:24.4px;font-weight:400;color:#d2d2d2;letter-spacing:0.242px;">Sprite Sort Point</div>
<div class="b" style="left:733px;top:597px;width:336px;height:35px;background:#515151;border-radius:5px;border:1px solid #303030;border-bottom:2px solid #2a2a2a;"></div>
<svg class="b" style="left:1043px;top:610px;" width="15" height="9" viewBox="0 0 15 9"><path d="M0 0H15L7.5 9Z" fill="#c4c4c4"/></svg>
<div class="t" style="left:740.0px;top:601.55px;font-size:24.4px;font-weight:400;color:#e4e4e4;letter-spacing:0.681px;">Center</div>
<div class="t" style="left:490.5px;top:642.55px;font-size:24.4px;font-weight:400;color:#d2d2d2;letter-spacing:0.524px;">Material</div>
<div class="b" style="left:732px;top:636px;width:338px;height:36px;background:#2a2a2a;border-radius:5px;border:1px solid #212121;border-top:2px solid #0f0f0f;border-top:1px solid #1c1c1c;"></div>
<div class="b" style="left:1031.5px;top:638px;width:37.5px;height:33px;background:#3a3a3a;border-radius:0 4px 4px 0;"></div>
<svg class="b" style="left:1040px;top:644.3px;" width="20" height="20" viewBox="0 0 20 20"><circle cx="10" cy="10" r="9" fill="none" stroke="#c4c4c4" stroke-width="2"/><circle cx="10" cy="10" r="3.2" fill="#c4c4c4"/></svg>
<div class="b" style="left:760px;top:638px;width:272px;height:33px;overflow:hidden;">
<div class="t" style="left:4.5px;top:5.55px;font-size:24.4px;font-weight:400;color:#dcdcdc;letter-spacing:0.746px;">Sprites-Default</div>
</div>

<svg class="b" style="left:739.4px;top:644.4px;" width="20" height="20" viewBox="0 0 20 20"><circle cx="10" cy="10" r="9" fill="#2a2a2a" stroke="#8ed3f8" stroke-width="1.400"/><circle cx="8" cy="7.300" r="6.200" fill="#8ed3f8"/></svg>
<svg class="b" style="left:464.5px;top:687px;" width="18" height="15.5" viewBox="0 0 18 15.5"><path d="M0 0H18L9.0 15.5Z" fill="#6c6c6c"/></svg>
<div class="t" style="left:492.8px;top:682.55px;font-size:24.4px;font-weight:700;color:#dcdcdc;letter-spacing:0.129px;">Additional Settings</div>
<div class="t" style="left:520.5px;top:722.55px;font-size:24.4px;font-weight:400;color:#d2d2d2;letter-spacing:0.412px;">Sorting Layer</div>
<div class="b" style="left:733px;top:717px;width:336px;height:35px;background:#515151;border-radius:5px;border:1px solid #303030;border-bottom:2px solid #2a2a2a;"></div>
<svg class="b" style="left:1043px;top:730px;" width="15" height="9" viewBox="0 0 15 9"><path d="M0 0H15L7.5 9Z" fill="#c4c4c4"/></svg>
<div class="t" style="left:740.5px;top:721.55px;font-size:24.4px;font-weight:400;color:#e4e4e4;letter-spacing:0.616px;">Default</div>
<div class="t" style="left:520.9px;top:762.55px;font-size:24.4px;font-weight:400;color:#82adf6;letter-spacing:0.132px;">Order in Layer</div>
<div class="b" style="left:732px;top:756px;width:338px;height:36px;background:#2a2a2a;border-radius:5px;border:2px solid #3a79bb;"></div>
<div class="t" style="left:739.0px;top:762.55px;font-size:24.4px;font-weight:400;color:#d2d2d2;letter-spacing:0.000px;">5</div>
<div class="b" style="left:452px;top:808px;width:626px;height:2px;background:#1a1a1a;"></div>
<div class="b" style="left:452px;top:810px;width:626px;height:2px;background:#3e3e3e;"></div>
<div class="b" style="left:1082px;top:2px;width:918px;height:38px;background:#282828;border-radius:6px 0 0 0;"></div>
<div class="b" style="left:1082px;top:2px;width:154px;height:38px;background:#3c3c3c;border-radius:6px 6px 0 0;"></div>
<div class="b" style="left:1082px;top:40px;width:918px;height:52px;background:#3c3c3c;"></div>
<svg class="b" style="left:1096px;top:8px" width="26" height="26" viewBox="1096 8 26 26"><path d="M1103 12.200V29.800M1109 10.300V31.900M1115 12.200V29.800M1100 15H1118M1098 21H1120M1100 27H1118" stroke="#c8c8c8" stroke-width="2" fill="none"/></svg>
<div class="t" style="left:1129.7px;top:10.55px;font-size:24.4px;font-weight:400;color:#d2d2d2;letter-spacing:0.723px;">Scene</div>
<svg class="b" style="left:1252px;top:15.5px;" width="28" height="15" viewBox="0 0 28 15"><path d="M7 0H21A7 7 0 0 1 28 7V8A6.500 6.500 0 0 1 21.500 14.500Q19.500 14.500 18 12H10Q8.500 14.500 6.500 14.500A6.500 6.500 0 0 1 0 8V7A7 7 0 0 1 7 0Z" fill="#c4c4c4"/><path d="M7.500 3.800V10M4.400 6.900H10.600" stroke="#282828" stroke-width="1.800"/><circle cx="18.500" cy="9" r="1.900" fill="#282828"/><circle cx="22.300" cy="5" r="1.900" fill="#282828"/></svg>
<div class="t" style="left:1286.0px;top:10.55px;font-size:24.4px;font-weight:400;color:#d2d2d2;letter-spacing:-0.119px;">Game</div>
<div class="b" style="left:1094.4px;top:50px;width:2px;height:32px;background:#5a5a5a;"></div>
<div class="b" style="left:1100.9px;top:50px;width:2px;height:32px;background:#5a5a5a;"></div>
<div class="b" style="left:1290.5px;top:50px;width:2px;height:32px;background:#5a5a5a;"></div>
<div class="b" style="left:1297.0px;top:50px;width:2px;height:32px;background:#5a5a5a;"></div>
<div class="b" style="left:1114px;top:46px;width:76px;height:40px;background:#585858;border-radius:5px;"></div>
<svg class="b" style="left:1121px;top:51px;" width="30" height="30" viewBox="0 0 30 30"><path d="M2.200 17.500V2.500Q2.200 1.500 3.200 1.500H28Q29 1.500 29 2.500V27Q29 28 28 28H12.500" fill="none" stroke="#c4c4c4" stroke-width="2"/><path d="M12.5 17L24.5 5" stroke="#c4c4c4" stroke-width="2"/><circle cx="6.8" cy="23" r="5" fill="none" stroke="#f4804a" stroke-width="2"/></svg>
<svg class="b" style="left:1161.8px;top:61.8px;" width="16.5" height="10" viewBox="0 0 16.5 10"><path d="M0 0H16.5L8.25 10Z" fill="#c4c4c4"/></svg>
<div class="b" style="left:1196px;top:46px;width:76px;height:40px;background:#585858;border-radius:5px;"></div>
<svg class="b" style="left:1203px;top:51px;" width="30" height="30" viewBox="0 0 30 30"><g fill="none" stroke="#c4c4c4" stroke-width="2" stroke-linejoin="round"><path d="M15 1.5L28 7.5V17M17 28L15 28.5L2 22.5V7.5L15 1.5"/><path d="M2 7.5L15 13.5L28 7.5M15 13.5V28"/></g><circle cx="23.2" cy="23" r="5" fill="#585858" stroke="#f4804a" stroke-width="2"/></svg>
<svg class="b" style="left:1244px;top:61.8px;" width="16.5" height="10" viewBox="0 0 16.5 10"><path d="M0 0H16.5L8.25 10Z" fill="#c4c4c4"/></svg>
<div class="b" style="left:1310px;top:46px;width:44px;height:40px;background:#4a5f7c;border-radius:5px 0 0 5px;"></div>
<div class="b" style="left:1356px;top:46px;width:28px;height:40px;background:#4a5f7c;border-radius:0 5px 5px 0;"></div>
<svg class="b" style="left:1310px;top:46px" width="44" height="40" viewBox="1310 46 44 40"><g stroke="#f4f4f4" stroke-width="2.2" fill="none"><path d="M1322.900 53V77M1331 52V61M1331 71.500V78.300M1339.100 53V63"/><path d="M1319 57H1343.300M1318 65H1331M1319 73H1333.500"/></g></svg>
<div class="t" style="left:1330.2px;top:61.2px;font-size:23.5px;font-weight:700;color:#f4f4f4;transform:scaleX(1.05);transform-origin:left;">Y</div>
<svg class="b" style="left:1361.7px;top:61.7px;" width="16.5" height="10" viewBox="0 0 16.5 10"><path d="M0 0H16.5L8.25 10Z" fill="#c4c4c4"/></svg>
<div class="b" style="left:1390px;top:46px;width:44px;height:40px;background:#4b4b4b;border-radius:5px 0 0 5px;"></div>
<div class="b" style="left:1436px;top:46px;width:28px;height:40px;background:#4b4b4b;border-radius:0 5px 5px 0;"></div>
<svg class="b" style="left:1390px;top:46px" width="44" height="40" viewBox="1390 46 44 40"><g stroke="#828282" stroke-width="2" fill="none"><path d="M1403 52V77.600M1411 52V63.200M1419.100 52V63.200"/><path d="M1398 57H1423.600M1398 65H1405.800M1398 73H1405.800"/></g><rect x="1408" y="66.300" width="4.200" height="4.200" fill="#a8a8a8"/><rect x="1408" y="76.100" width="4.200" height="4.200" fill="#a8a8a8"/><path d="M1413.900 68.400H1419A4.800 4.800 0 0 1 1419 78H1413.900" fill="none" stroke="#b0643f" stroke-width="4"/></svg>
<svg class="b" style="left:1442px;top:61.7px;" width="16.5" height="10" viewBox="0 0 16.5 10"><path d="M0 0H16.5L8.25 10Z" fill="#8a8a8a"/></svg>
<div class="b" style="left:1470px;top:46px;width:76px;height:40px;background:#585858;border-radius:5px;"></div>
<svg class="b" style="left:1470px;top:46px" width="44" height="40" viewBox="1470 46 44 40"><g stroke="#c8c8c8" fill="none"><path d="M1479 52V78M1503 52V78" stroke-width="2.200"/><path d="M1483 58.100V71.900M1487 58.100V71.900M1491 54V76M1495 58.100V71.900M1499 58.100V71.900" stroke-width="2"/><path d="M1479 65H1503" stroke-width="2"/></g></svg>
<svg class="b" style="left:1517.8px;top:61.8px;" width="16.5" height="10" viewBox="0 0 16.5 10"><path d="M0 0H16.5L8.25 10Z" fill="#c4c4c4"/></svg>
<div class="b" style="left:1082px;top:92px;width:918px;height:720px;background:#474747;overflow:hidden;">
<svg class="b" style="left:0;top:0" width="918" height="720" viewBox="1082 92 918 720">
<!-- tan crate top right -->
<rect x="1962" y="92" width="40" height="120" fill="#c29c71"/>
<path d="M1962 92H1986L1962 114Z" fill="#be9264"/><path d="M1962 161L2000 125V171L1962 204Z" fill="#be9264"/>
<!-- ground -->
<rect x="1240" y="726" width="622" height="90" fill="#8ebc40"/>
<rect x="1240" y="726" width="622" height="7" fill="#a0d750"/>
<path d="M1240.0 795.4 L1274.8 762.8 L1309.2 796.7 L1343.7 762.8 L1378.2 796.7 L1412.6 762.8 L1447.0 796.7 L1481.5 762.8 L1516.0 796.7 L1550.4 762.8 L1584.9 796.7 L1619.3 762.8 L1653.8 796.7 L1688.2 762.8 L1722.7 796.7 L1757.1 762.8 L1791.5 796.7 L1826.0 762.8 L1862.0 795.4 V816 H1240 Z" fill="#b28450"/>
<path d="M1240.0 811.1 L1274.8 778.5 L1309.2 812.4 L1343.7 778.5 L1378.2 812.4 L1412.6 778.5 L1447.0 812.4 L1481.5 778.5 L1516.0 812.4 L1550.4 778.5 L1584.9 812.4 L1619.3 778.5 L1653.8 812.4 L1688.2 778.5 L1722.7 812.4 L1757.1 778.5 L1791.5 812.4 L1826.0 778.5 L1862.0 811.1 V816 H1240 Z" fill="#c09466"/>
<!-- alien -->
<g>
 <path d="M1304 402 C1290 412 1281 430 1282.500 446 C1283 459.500 1298.500 459.500 1299 447 C1299 436 1303 428 1310 424 L1312.500 426 L1313 446 C1313.500 458 1318 466 1324.500 470.500 L1327 511.600 L1354 511.600 L1357.300 485.700 L1398 485.700 L1401.600 511.600 L1428.800 511.600 L1431.400 470.500 C1438 466 1442 458 1442.500 446 L1443 427 C1450 430 1449 440 1449 447 C1450 459.500 1464 459.500 1464.500 446 C1466 430 1458 412 1446 403 Z" fill="#82c4ac"/>
 <rect x="1312.500" y="262" width="131" height="215" rx="62" fill="#82c4ac"/>
 <circle cx="1390" cy="459" r="12" fill="#8fcbb5"/><circle cx="1425" cy="437" r="9" fill="#8fcbb5"/><circle cx="1416.500" cy="456.500" r="6.400" fill="#8fcbb5"/>
 <circle cx="1377.300" cy="335.200" r="84" fill="#ffffff" fill-opacity="0.21"/>
 <circle cx="1411" cy="304" r="27" fill="#ffffff" fill-opacity="0.13"/>
 <circle cx="1366" cy="359.800" r="14.800" fill="#6c9987"/><circle cx="1419" cy="359.800" r="14.800" fill="#6c9987"/>
 <path d="M1373 385 Q1392 403 1411 385" fill="none" stroke="#6c9987" stroke-width="4.500" stroke-linecap="round"/>
 <circle cx="1377.300" cy="335.200" r="89.600" fill="none" stroke="#ffffff" stroke-width="16"/>
</g>
<!-- crosshair -->
<g>
 <circle cx="1790.400" cy="375" r="93.300" fill="none" stroke="#000" stroke-width="20"/>
 <g stroke="#000" stroke-width="20" stroke-linecap="round"><path d="M1790.400 284V313.300"/><path d="M1790.400 466V435.500"/><path d="M1699 375H1730"/><path d="M1882 375H1851"/></g>
</g>
<!-- grid -->
<g stroke="#808080" stroke-opacity="0.5" stroke-width="1">
<path d="M1138.500 92V812M1344.500 92V812M1550.500 92V812M1757.500 92V812M1963.500 92V812"/>
<path d="M1082 211.500H2000M1082 418.500H2000M1082 624.500H2000"/>
</g>
<!-- gizmo -->
<defs><linearGradient id="gg" x1="0" x2="1" y1="0" y2="0"><stop offset="0" stop-color="#b4f06e"/><stop offset="0.55" stop-color="#9ce25c"/><stop offset="1" stop-color="#7fc048"/></linearGradient><linearGradient id="rg" x1="0" x2="0" y1="0" y2="1"><stop offset="0" stop-color="#f06a48"/><stop offset="0.5" stop-color="#e1553a"/><stop offset="1" stop-color="#b8422a"/></linearGradient></defs>
<rect x="1791.500" y="334.500" width="39" height="39" fill="#454a6e" stroke="#5a6ed0" stroke-width="1"/>
<path d="M1790.200 375V229" stroke="#9ade62" stroke-opacity="0.850" stroke-width="3.600"/><path d="M1790.200 193L1802.500 230.500Q1790 232.500 1778 230.500Z" fill="url(#gg)"/>
<path d="M1790 375.200H1936" stroke="#e0553a" stroke-opacity="0.700" stroke-width="3.200"/><path d="M1972 375L1934 362.500Q1932.500 375 1934 387.500Z" fill="url(#rg)"/>
</svg>
</div>
<div class="b" style="left:1086px;top:96px;width:86px;height:288px;background:#0f0f0f;border-radius:9px;"></div>
<div class="b" style="left:1113px;top:108px;width:32px;height:1.5px;background:#6a6a6a;"></div>
<div class="b" style="left:1113px;top:115px;width:32px;height:1.5px;background:#6a6a6a;"></div>
<div class="b" style="left:1092px;top:128px;width:74px;height:40px;background:#575757;border-radius:5px 5px 0 0;"></div>
<div class="b" style="left:1092px;top:170px;width:74px;height:40px;background:#4a5f7c;"></div>
<div class="b" style="left:1092px;top:212px;width:74px;height:40px;background:#575757;"></div>
<div class="b" style="left:1092px;top:254px;width:74px;height:40px;background:#575757;"></div>
<div class="b" style="left:1092px;top:296px;width:74px;height:40px;background:#575757;"></div>
<div class="b" style="left:1092px;top:338px;width:74px;height:40px;background:#575757;border-radius:0 0 5px 5px;"></div>
<svg class="b" style="left:1114.5px;top:132px;" width="28.5" height="30" viewBox="1 0.5 26.5 29"><path d="M9 29 C5 22 2 17 1.5 13.5 C1.5 11.5 4 11.5 5 13.5 L8 18 L7 5 C7 3 10 3 10.300 5 L11.500 13 L12.500 2.500 C12.700 0.500 15.800 0.500 15.800 2.500 L16 13 L18.500 4 C19 2 22 2.500 21.700 4.500 L20.500 14 L24 9 C25 7.500 27.500 8.500 26.800 10.500 C25 16 24 23 21 29 Z" fill="#c4c4c4"/></svg>
<svg class="b" style="left:1113px;top:174px;" width="32" height="32" viewBox="0 0 32 32"><g fill="none" stroke="#f0f0f0" stroke-width="2.2"><path d="M16 1.500V12.500M16 19.500V30.500M1.500 16H12.500M19.500 16H30.500"/><path d="M11 6.500L16 1.500L21 6.500M11 25.500L16 30.500L21 25.500M6.500 11L1.500 16L6.500 21M25.500 11L30.500 16L25.500 21"/></g></svg>
<svg class="b" style="left:1114px;top:217px;" width="30" height="30" viewBox="0 0 30 30"><g fill="none" stroke="#c4c4c4" stroke-width="2"><path d="M15.200 2.700A12.500 12.500 0 0 0 10.400 26.800"/><path d="M1.600 27.200H10.400V19.500"/><path d="M15.200 27.700A12.500 12.500 0 0 0 20 3.600"/><path d="M28.800 2.400H20V10.400"/></g></svg>
<svg class="b" style="left:1115px;top:260px;" width="28" height="28" viewBox="0 0 28 28"><g fill="none" stroke="#c4c4c4" stroke-width="2"><rect x="1" y="1" width="26" height="26" rx="1"/><path d="M1 19.500H8.800V27M12.400 15.800L21 7.300M14 6.600H21.600V14"/></g></svg>
<svg class="b" style="left:1115px;top:302px;" width="28" height="28" viewBox="0 0 28 28"><g fill="#c4c4c4"><rect x="0" y="0" width="6" height="6"/><rect x="22" y="0" width="6" height="6"/><rect x="0" y="22" width="6" height="6"/><rect x="22" y="22" width="6" height="6"/><rect x="2" y="9" width="2" height="10"/><rect x="24" y="9" width="2" height="10"/><rect x="8.300" y="2" width="11.400" height="2"/><rect x="8.300" y="24" width="11.400" height="2"/></g></svg>
<svg class="b" style="left:1112px;top:342px;" width="34" height="34" viewBox="0 0 34 34"><g fill="none" stroke="#c4c4c4" stroke-width="2"><path d="M9.490 5.470A13.100 13.100 0 0 1 24.510 5.470M27.730 8.690A13.100 13.100 0 0 1 27.730 23.710M24.510 26.930A13.100 13.100 0 0 1 9.490 26.930M6.270 23.710A13.100 13.100 0 0 1 6.270 8.690"/><path d="M17 6V26.500M6.500 16.200H27.500M14 9L17 6L20 9M14 23.500L17 26.500L20 23.500M9.500 13.200L6.500 16.200L9.500 19.200M24.500 13.200L27.500 16.200L24.500 19.200"/></g><path d="M27.500 0H33V5.500Z" fill="#c4c4c4"/><path d="M1 27V32.500H6.500Z" fill="#c4c4c4"/></svg>
</div></body></html>
